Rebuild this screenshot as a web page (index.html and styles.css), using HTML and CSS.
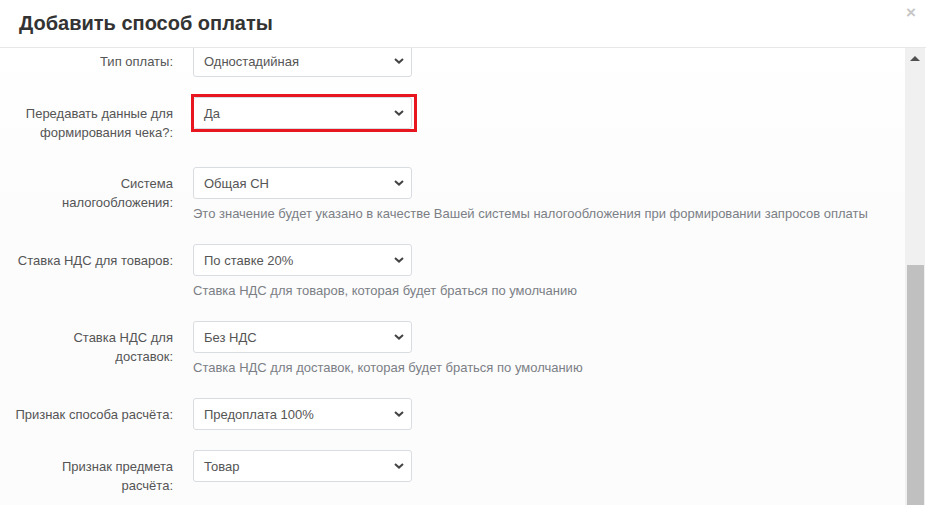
FILE: index.html
```html
<!DOCTYPE html>
<html lang="ru">
<head>
    <meta charset="UTF-8">
    <meta name="viewport" content="width=device-width, initial-scale=1.0">
    <title>Добавить способ оплаты</title>
    <link rel="stylesheet" href="styles.css">
</head>
<body>
    <div class="modal">
        <div class="modal-header">
            <h4 class="modal-title">Добавить способ оплаты</h4>
            <span class="close">&times;</span>
        </div>
        <div class="modal-body">
            <div class="modal-content">
                <form class="form-horizontal">
                    <div class="form-group">
                        <label class="control-label">Тип оплаты:</label>
                        <div class="control">
                            <div class="select">
                                <span>Одностадийная</span>
                                <svg class="caret" width="10" height="6" viewBox="0 0 10 6"><path d="M1 1l4 3.6L9 1" fill="none" stroke="#444" stroke-width="2"/></svg>
                            </div>
                        </div>
                    </div>
                    <div class="form-group">
                        <label class="control-label">Передавать данные для<br>формирования чека?:</label>
                        <div class="control">
                            <div class="select marked">
                                <span>Да</span>
                                <svg class="caret" width="10" height="6" viewBox="0 0 10 6"><path d="M1 1l4 3.6L9 1" fill="none" stroke="#444" stroke-width="2"/></svg>
                            </div>
                        </div>
                    </div>
                    <div class="form-group">
                        <label class="control-label">Система<br>налогообложения:</label>
                        <div class="control">
                            <div class="select">
                                <span>Общая СН</span>
                                <svg class="caret" width="10" height="6" viewBox="0 0 10 6"><path d="M1 1l4 3.6L9 1" fill="none" stroke="#444" stroke-width="2"/></svg>
                            </div>
                            <p class="help-block">Это значение будет указано в качестве Вашей системы налогообложения при формировании запросов оплаты</p>
                        </div>
                    </div>
                    <div class="form-group">
                        <label class="control-label">Ставка НДС для товаров:</label>
                        <div class="control">
                            <div class="select">
                                <span>По ставке 20%</span>
                                <svg class="caret" width="10" height="6" viewBox="0 0 10 6"><path d="M1 1l4 3.6L9 1" fill="none" stroke="#444" stroke-width="2"/></svg>
                            </div>
                            <p class="help-block">Ставка НДС для товаров, которая будет браться по умолчанию</p>
                        </div>
                    </div>
                    <div class="form-group">
                        <label class="control-label">Ставка НДС для<br>доставок:</label>
                        <div class="control">
                            <div class="select">
                                <span>Без НДС</span>
                                <svg class="caret" width="10" height="6" viewBox="0 0 10 6"><path d="M1 1l4 3.6L9 1" fill="none" stroke="#444" stroke-width="2"/></svg>
                            </div>
                            <p class="help-block">Ставка НДС для доставок, которая будет браться по умолчанию</p>
                        </div>
                    </div>
                    <div class="form-group">
                        <label class="control-label">Признак способа расчёта:</label>
                        <div class="control">
                            <div class="select">
                                <span>Предоплата 100%</span>
                                <svg class="caret" width="10" height="6" viewBox="0 0 10 6"><path d="M1 1l4 3.6L9 1" fill="none" stroke="#444" stroke-width="2"/></svg>
                            </div>
                        </div>
                    </div>
                    <div class="form-group">
                        <label class="control-label">Признак предмета<br>расчёта:</label>
                        <div class="control">
                            <div class="select">
                                <span>Товар</span>
                                <svg class="caret" width="10" height="6" viewBox="0 0 10 6"><path d="M1 1l4 3.6L9 1" fill="none" stroke="#444" stroke-width="2"/></svg>
                            </div>
                        </div>
                    </div>
                </form>
            </div>
            <!-- scroll track, content is scrolled to the bottom -->
            <div class="scrollbar">
                <div class="scroll-arrow"></div>
                <div class="scroll-thumb"></div>
            </div>
        </div>
    </div>
</body>
</html>
```

FILE: styles.css
```css
* {
    box-sizing: border-box;
}
body {
    margin: 0;
    font-family: "Liberation Sans", Arial, sans-serif;
    font-size: 13px;
    color: #555;
    background: #fff;
}
.modal {
    width: 926px;
    height: 505px;
    display: flex;
    flex-direction: column;
    overflow: hidden;
}
.modal-header {
    height: 48px;
    flex: none;
    display: flex;
    align-items: center;
    justify-content: space-between;
    padding: 0 10px 0 19px;
    border-bottom: 1px solid #e8e8e8;
    position: relative;
    z-index: 1;
    background: #fff;
}
.modal-title {
    margin: 0 0 1px;
    font-size: 20px;
    font-weight: bold;
    color: #333;
}
.close {
    align-self: flex-start;
    margin-top: 4px;
    font-size: 17px;
    font-weight: bold;
    line-height: 1;
    color: #c6c6c6;
}
.modal-body {
    flex: 1;
    display: flex;
    min-height: 0;
}
.modal-content {
    flex: 1;
    overflow: hidden;
    background: linear-gradient(#fff, #fcfcfd 160px);
}
.form-horizontal {
    margin-top: -3px;
}
.form-group {
    display: grid;
    grid-template-columns: 173px 1fr;
    column-gap: 20px;
    margin-bottom: 20px;
}
.control-label {
    text-align: right;
    white-space: nowrap;
    padding: 7px 0 5px;
    line-height: 19px;
    color: #555;
}
.select {
    width: 219px;
    height: 32px;
    display: flex;
    align-items: center;
    justify-content: space-between;
    padding: 0 7px 0 10px;
    border: 1px solid #d9dde1;
    border-radius: 3px;
    background: #fff;
    color: #555;
    position: relative;
}
.caret {
    display: block;
}
/* red frame drawn round the highlighted field */
.select.marked::after {
    content: "";
    position: absolute;
    top: -4px;
    left: -3px;
    right: -6px;
    bottom: -4px;
    border: 3px solid #e8161f;
}
.help-block {
    margin: 5px 0 1px;
    line-height: 19px;
    white-space: nowrap;
    color: #7b7f85;
}
.scrollbar {
    width: 21px;
    flex: none;
    border-right: 1px solid #fff;
    background: #f0f0f0;
    display: flex;
    flex-direction: column;
    justify-content: space-between;
    align-items: center;
}
.scroll-arrow {
    margin-top: 8px;
    width: 0;
    height: 0;
    border-left: 5px solid transparent;
    border-right: 5px solid transparent;
    border-bottom: 5px solid #505050;
}
.scroll-thumb {
    width: 17px;
    height: 240px;
    margin-left: 1px;
    background: #c0c0c0;
}
```
